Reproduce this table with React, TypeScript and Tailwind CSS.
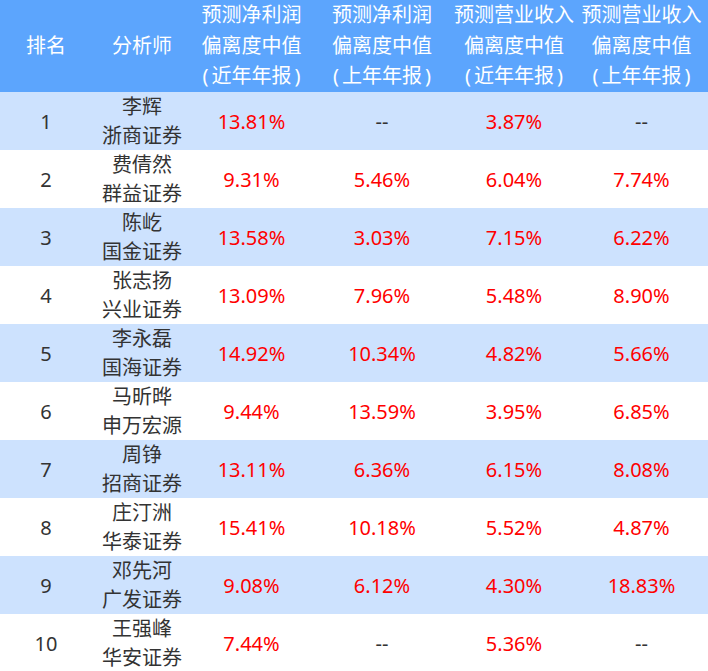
import React from 'react';

const rows = [
  { rank: '1', name: '李辉', firm: '浙商证券', a: '13.81%', b: '--', c: '3.87%', d: '--' },
  { rank: '2', name: '费倩然', firm: '群益证券', a: '9.31%', b: '5.46%', c: '6.04%', d: '7.74%' },
  { rank: '3', name: '陈屹', firm: '国金证券', a: '13.58%', b: '3.03%', c: '7.15%', d: '6.22%' },
  { rank: '4', name: '张志扬', firm: '兴业证券', a: '13.09%', b: '7.96%', c: '5.48%', d: '8.90%' },
  { rank: '5', name: '李永磊', firm: '国海证券', a: '14.92%', b: '10.34%', c: '4.82%', d: '5.66%' },
  { rank: '6', name: '马昕晔', firm: '申万宏源', a: '9.44%', b: '13.59%', c: '3.95%', d: '6.85%' },
  { rank: '7', name: '周铮', firm: '招商证券', a: '13.11%', b: '6.36%', c: '6.15%', d: '8.08%' },
  { rank: '8', name: '庄汀洲', firm: '华泰证券', a: '15.41%', b: '10.18%', c: '5.52%', d: '4.87%' },
  { rank: '9', name: '邓先河', firm: '广发证券', a: '9.08%', b: '6.12%', c: '4.30%', d: '18.83%' },
  { rank: '10', name: '王强峰', firm: '华安证券', a: '7.44%', b: '--', c: '5.36%', d: '--' },
];

const headers = [
  ['预测净利润', '偏离度中值', '近年年报'],
  ['预测净利润', '偏离度中值', '上年年报'],
  ['预测营业收入', '偏离度中值', '近年年报'],
  ['预测营业收入', '偏离度中值', '上年年报'],
];

const cols = 'grid grid-cols-[92px_100px_119px_142px_122px_133px]';

function Value({ v }: { v: string }) {
  return (
    <div className={`flex items-center justify-center ${v === '--' ? 'text-[#333333]' : 'text-[#ff0000]'}`}>
      {v}
    </div>
  );
}

export default function App() {
  return (
    <div
      className="w-[708px] h-[671px] overflow-hidden bg-white text-[20px]"
      style={{ fontFamily: '"Noto Sans", "Noto Sans CJK SC", sans-serif' }}
    >
      {/* Header */}
      <div className={`${cols} h-[92px] bg-[#5ca5fd] text-white leading-[30.5px]`}>
        <div className="flex items-center justify-center">排名</div>
        <div className="flex items-center justify-center">分析师</div>
        {headers.map((h, i) => (
          <div key={i} className="flex flex-col items-center justify-center whitespace-nowrap">
            <span>{h[0]}</span>
            <span>{h[1]}</span>
            <span>
              <span className="mr-[3px]">(</span>
              {h[2]}
              <span className="ml-[3px]">)</span>
            </span>
          </div>
        ))}
      </div>

      {/* Rows */}
      {rows.map((r, i) => (
        <div
          key={r.rank}
          className={`${cols} h-[58px] leading-[29px] ${i % 2 === 0 ? 'bg-[#cde2fe]' : 'bg-white'}`}
        >
          <div className="flex items-center justify-center text-[#333333]">{r.rank}</div>
          <div className="flex flex-col items-center justify-center text-[#333333]">
            <span>{r.name}</span>
            <span>{r.firm}</span>
          </div>
          <Value v={r.a} />
          <Value v={r.b} />
          <Value v={r.c} />
          <Value v={r.d} />
        </div>
      ))}
    </div>
  );
}
